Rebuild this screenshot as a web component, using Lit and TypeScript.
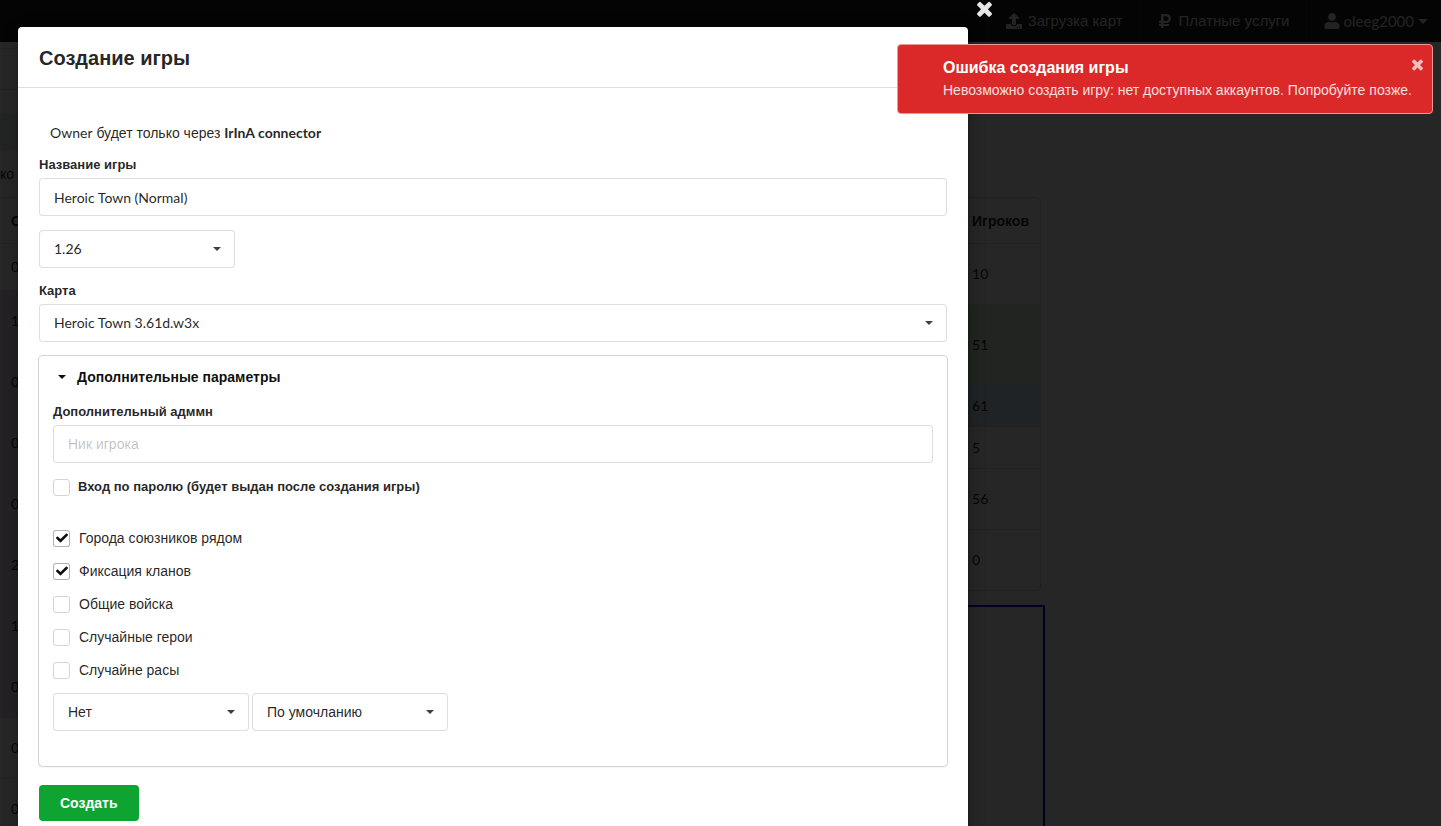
import { LitElement, html, css, svg } from "lit";
import { customElement, state } from "lit/decorators.js";

const ICONS = {
  upload: {
    box: "0 0 512 512",
    d: "M296 384h-80c-13.3 0-24-10.7-24-24V192h-87.7c-17.8 0-26.7-21.5-14.1-34.1L242.3 5.7c7.5-7.5 19.8-7.5 27.3 0l152.2 152.2c12.6 12.6 3.7 34.1-14.1 34.1H320v168c0 13.3-10.7 24-24 24zm216-8v112c0 13.3-10.7 24-24 24H24c-13.3 0-24-10.7-24-24V376c0-13.3 10.7-24 24-24h136v8c0 30.9 25.1 56 56 56h80c30.9 0 56-25.1 56-56v-8h136c13.3 0 24 10.7 24 24zm-124 88c0-11-9-20-20-20s-20 9-20 20 9 20 20 20 20-9 20-20zm64 0c0-11-9-20-20-20s-20 9-20 20 9 20 20 20 20-9 20-20z",
  },
  ruble: {
    box: "-64 0 512 512",
    d: "M239.36 320C324.48 320 384 260.542 384 175.071S324.48 32 239.36 32H76c-6.627 0-12 5.373-12 12v206.632H12c-6.627 0-12 5.373-12 12V308c0 6.627 5.373 12 12 12h52v32H12c-6.627 0-12 5.373-12 12v40c0 6.627 5.373 12 12 12h52v52c0 6.627 5.373 12 12 12h58.56c6.627 0 12-5.373 12-12v-52H308c6.627 0 12-5.373 12-12v-40c0-6.627-5.373-12-12-12H146.56v-32h92.8zm-92.8-219.252h78.72c46.72 0 74.88 29.11 74.88 74.323 0 45.832-28.16 75.561-76.16 75.561h-77.44V100.748z",
  },
  user: {
    box: "-32 0 512 512",
    d: "M224 256c70.7 0 128-57.3 128-128S294.7 0 224 0 96 57.3 96 128s57.3 128 128 128zm89.6 32h-16.7c-22.2 10.2-46.9 16-72.9 16s-50.6-5.8-72.9-16h-16.7C60.2 288 -20 328.2 -20 412.4V464c0 26.5 21.5 48 48 48h392c26.5 0 48-21.5 48-48v-51.6c0-84.2-80.2-124.4-154.4-124.4z",
  },
  close: {
    box: "302 302 1188 1188",
    d: "M1490 1322q0 40-28 68l-136 136q-28 28-68 28t-68-28l-294-294-294 294q-28 28-68 28t-68-28l-136-136q-28-28-28-68t28-68l294-294-294-294q-28-28-28-68t28-68l136-136q28-28 68-28t68 28l294 294 294-294q28-28 68-28t68 28l136 136q28 28 28 68t-28 68l-294 294 294 294q28 28 28 68z",
  },
  check: {
    box: "0 0 512 512",
    d: "M173.898 439.404l-166.4-166.4c-9.997-9.997-9.997-26.206 0-36.204l36.203-36.204c9.997-9.998 36.207-9.998 46.204 0L192 302.69 422.095 72.596c9.997-9.997 36.207-9.997 46.204 0l36.203 36.204c9.997 9.997 9.997 26.206 0 36.204l-294.4 294.401c-9.998 9.997-26.207 9.997-36.204-.001z",
  },
  caret: { box: "0 0 10 5", d: "M0 0h10L5 5z" },
};

const icon = (name: keyof typeof ICONS) => html`
  <svg class="icon i-${name}" viewBox=${ICONS[name].box} aria-hidden="true">
    ${svg`<path d=${ICONS[name].d} fill="currentColor"></path>`}
  </svg>
`;

@customElement("app-root")
export class AppRoot extends LitElement {
  static styles = css`
    :host {
      display: block;
      position: relative;
      height: 100vh;
      overflow: hidden;
      background: #fff;
      color: rgba(0, 0, 0, 0.87);
      font: 14px/20px "Liberation Sans", Arial, sans-serif;
    }
    *, *::before, *::after { box-sizing: border-box; }
    .latin, td { font-family: Lato, "Liberation Sans", sans-serif; }
    .icon { display: block; overflow: visible; flex: none; }

    .menu {
      display: flex;
      justify-content: flex-end;
      height: 42px;
      background: #1b1b1b;
    }
    .menu a {
      display: flex;
      align-items: center;
      gap: 6px;
      padding: 0 16px 0 17px;
      border-left: 1px solid rgba(255, 255, 255, 0.08);
      color: rgba(255, 255, 255, 0.9);
      font-size: 15px;
      text-decoration: none;
    }
    .menu a:last-child { padding-right: 13px; gap: 4px; }
    .menu .icon { width: 16px; height: 16px; }
    .menu .i-caret { width: 10px; height: 5px; }

    .page { max-width: 1045px; }
    .strip { width: 90%; height: 42px; margin-top: 6px; border: solid #ddd; border-width: 1px 0; }
    .band { width: 90%; height: 36px; margin-top: 24px; background: #e4ecea; }
    .note { margin: 0; height: 47px; line-height: 48px; }
    .lists { display: flex; justify-content: space-between; height: 394px; padding-right: 4px; }
    table { border-collapse: separate; border-spacing: 0; }
    th, td { padding: 0 11px; text-align: left; border-bottom: 1px solid #e2e3e4; }
    .bots { width: 45%; align-self: flex-start; border-top: 1px solid #ddd; }
    .games {
      width: 45%;
      align-self: flex-start;
      border: 1px solid #d4d4d5;
      border-radius: 4px;
    }
    .games th:last-child, .games td:last-child { width: 78px; }
    .games tr:last-child td { border-bottom: 0; }
    .purple { background: #e6dfe9; }
    .green { background: #e5efdf; }
    .blue { background: #d5e9f7; }
    .h42 { height: 42px; }
    .h46 { height: 46px; }
    .h47 { height: 47px; }
    .h60 { height: 60px; }
    .h61 { height: 61px; }
    .h80 { height: 80px; }
    .frame { margin-top: 14px; height: 300px; border: 2px solid #0000d8; border-left: 0; }

    .dimmer {
      position: absolute;
      inset: 0;
      padding: 27px 18px 0;
      overflow: hidden;
      background: rgba(0, 0, 0, 0.85);
    }
    .modal {
      position: relative;
      max-width: 950px;
      min-height: 100%;
      border-radius: 4px;
      background: #fff;
      box-shadow: 1px 3px 3px rgba(0, 0, 0, 0.2), 1px 3px 15px 2px rgba(0, 0, 0, 0.2);
    }
    .close {
      padding: 0;
      border: 0;
      background: none;
      color: #fff;
      cursor: pointer;
    }
    .modal > .close { position: absolute; top: -26px; right: -24px; opacity: 0.9; }
    .modal > .close .icon { width: 15px; height: 15px; }
    .modal header {
      padding: 19px 21px 17px;
      border-bottom: 1px solid rgba(34, 36, 38, 0.15);
    }
    h1 { margin: 0; font-size: 20px; line-height: 24px; font-weight: 700; }
    form { padding: 21px 21px 28px; }
    .owner { margin: 0; padding: 14px 11px 13px; line-height: 19px; }
    .field { margin-bottom: 14px; }
    .field > label {
      display: block;
      margin-bottom: 4px;
      font-size: 13px;
      line-height: 18px;
      font-weight: 700;
    }
    .text, select {
      display: block;
      width: 100%;
      height: 38px;
      padding: 0 14px;
      border: 1px solid rgba(34, 36, 38, 0.15);
      border-radius: 4px;
      background: #fff;
      color: rgba(0, 0, 0, 0.87);
      font: inherit;
      outline: none;
    }
    .text.latin, .latin select { font-family: Lato, "Liberation Sans", sans-serif; }
    .text::placeholder { color: rgba(0, 0, 0, 0.25); opacity: 1; }
    select { appearance: none; }
    .select { display: grid; align-items: center; }
    .select > * { grid-area: 1 / 1; }
    .select .icon {
      justify-self: end;
      width: 8px;
      height: 4px;
      margin-right: 14px;
      color: rgba(0, 0, 0, 0.75);
      pointer-events: none;
    }
    .short { width: 196px; }
    .row { display: flex; gap: 3px; }

    .segment {
      padding: 12px 14px 35px;
      border-radius: 4px;
      box-shadow: 0 0 0 1px #d4d4d5, 0 1px 2px rgba(34, 36, 38, 0.15);
    }
    summary {
      display: flex;
      align-items: center;
      gap: 11px;
      margin-bottom: 17px;
      padding-left: 5px;
      line-height: 18px;
      font-size: 14px;
      font-weight: 700;
      color: rgba(0, 0, 0, 0.95);
      list-style: none;
      cursor: pointer;
    }
    summary .icon { width: 8px; height: 4px; }

    .option { display: flex; align-items: center; gap: 9px; margin-bottom: 13px; }
    .option.strong { gap: 8px; margin-bottom: 31px; font-size: 13px; font-weight: 700; }
    .box { display: grid; place-items: center; width: 17px; height: 17px; }
    .box > * { grid-area: 1 / 1; }
    .box input {
      appearance: none;
      width: 17px;
      height: 17px;
      margin: 0;
      border: 1px solid #d4d4d5;
      border-radius: 3px;
      background: #fff;
    }
    .box input:checked { border-color: rgba(34, 36, 38, 0.35); }
    .box .icon { z-index: 1; display: none; width: 12px; height: 12px; color: rgba(0, 0, 0, 0.95); pointer-events: none; }
    .box input:checked + .icon { display: block; }

    .submit {
      display: block;
      margin-top: 19px;
      height: 36px;
      padding: 0 21px;
      border: 0;
      border-radius: 4px;
      background: #0ea432;
      color: #fff;
      font: inherit;
      font-weight: 700;
      cursor: pointer;
    }

    .toast {
      position: absolute;
      top: 44px;
      right: 8px;
      width: 536px;
      max-width: calc(100% - 16px);
      padding: 12px 14px 12px 45px;
      border: 1px solid #e99;
      border-radius: 4px;
      background: #db2828;
      color: #fff;
    }
    .toast h2 { margin: 0; font-size: 16px; line-height: 22px; font-weight: 700; }
    .toast p { margin: 0; line-height: 22px; opacity: 0.85; }
    .toast .close { position: absolute; top: 14px; right: 9px; opacity: 0.7; }
    .toast .close .icon { width: 11px; height: 11px; }
  `;

  @state() private options = [
    { label: "Города союзников рядом", on: true },
    { label: "Фиксация кланов", on: true },
    { label: "Общие войска", on: false },
    { label: "Случайные герои", on: false },
    { label: "Случайне расы", on: false },
  ];

  private bots = [
    { slots: 0, look: "h47" },
    ...[1, 0, 0, 0, 2, 1, 0].map((slots) => ({ slots, look: "h61 purple" })),
    { slots: 0, look: "h61" },
    { slots: 0, look: "h61" },
  ];

  private games = [
    { players: 10, look: "h61" },
    { players: 51, look: "h80 green" },
    { players: 61, look: "h42 blue" },
    { players: 5, look: "h42" },
    { players: 56, look: "h61" },
    { players: 0, look: "h60" },
  ];

  private dropdown(value: string, label: string, look: string, id: string) {
    return html`
      <div class="select ${look}">
        <select id=${id} aria-label=${label}><option>${value}</option></select>
        ${icon("caret")}
      </div>
    `;
  }

  private checkbox(label: string, on: boolean, look = "") {
    return html`
      <label class="option ${look}">
        <span class="box"><input type="checkbox" .checked=${on} />${icon("check")}</span>
        ${label}
      </label>
    `;
  }

  render() {
    return html`
      <nav class="menu">
        <a href="#">${icon("upload")} Загрузка карт</a>
        <a href="#">${icon("ruble")} Платные услуги</a>
        <a href="#" class="latin">${icon("user")} oleeg2000 ${icon("caret")}</a>
      </nav>
      <main class="page">
        <div class="strip"></div>
        <div class="band"></div>
        <p class="note">ко</p>
        <div class="lists">
          <table class="bots">
            <tr class="h46"><th>С</th></tr>
            ${this.bots.map((b) => html`<tr class=${b.look}><td>${b.slots}</td></tr>`)}
          </table>
          <table class="games">
            <tr class="h46"><th></th><th>Игроков</th></tr>
            ${this.games.map((g) => html`<tr class=${g.look}><td></td><td>${g.players}</td></tr>`)}
          </table>
        </div>
        <div class="frame"></div>
      </main>

      <div class="dimmer">
        <section class="modal" role="dialog" aria-labelledby="title">
          <button class="close" aria-label="Закрыть">${icon("close")}</button>
          <header><h1 id="title">Создание игры</h1></header>
          <form @submit=${(e: Event) => e.preventDefault()}>
            <p class="owner"><span class="latin">Owner</span> будет только через <b class="latin">IrInA connector</b></p>
            <div class="field">
              <label for="name">Название игры</label>
              <input class="text latin" id="name" type="text" value="Heroic Town (Normal)" />
            </div>
            <div class="field">${this.dropdown("1.26", "Версия", "short latin", "version")}</div>
            <div class="field">
              <label for="map">Карта</label>
              ${this.dropdown("Heroic Town 3.61d.w3x", "Карта", "latin", "map")}
            </div>
            <details class="segment" open>
              <summary>${icon("caret")} Дополнительные параметры</summary>
              <div class="field">
                <label for="admin">Дополнительный адммн</label>
                <input class="text" id="admin" type="text" placeholder="Ник игрока" />
              </div>
              ${this.checkbox("Вход по паролю (будет выдан после создания игры)", false, "strong")}
              ${this.options.map((o) => this.checkbox(o.label, o.on))}
              <div class="row">
                ${this.dropdown("Нет", "Наблюдатели", "short", "observers")}
                ${this.dropdown("По умочланию", "Видимость", "short", "visibility")}
              </div>
            </details>
            <button class="submit" type="submit">Создать</button>
          </form>
        </section>
      </div>

      <aside class="toast" role="alert">
        <button class="close" aria-label="Закрыть">${icon("close")}</button>
        <h2>Ошибка создания игры</h2>
        <p>Невозможно создать игру: нет доступных аккаунтов. Попробуйте позже.</p>
      </aside>
    `;
  }
}
